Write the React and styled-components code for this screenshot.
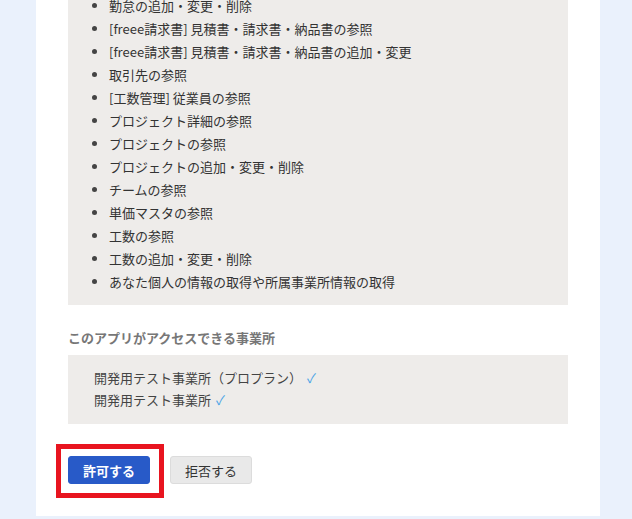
import React from "react";
import styled, { createGlobalStyle } from "styled-components";

const permissions = [
  "勤怠の追加・変更・削除",
  "[freee請求書] 見積書・請求書・納品書の参照",
  "[freee請求書] 見積書・請求書・納品書の追加・変更",
  "取引先の参照",
  "[工数管理] 従業員の参照",
  "プロジェクト詳細の参照",
  "プロジェクトの参照",
  "プロジェクトの追加・変更・削除",
  "チームの参照",
  "単価マスタの参照",
  "工数の参照",
  "工数の追加・変更・削除",
  "あなた個人の情報の取得や所属事業所情報の取得",
];

const companies = ["開発用テスト事業所（プロプラン）", "開発用テスト事業所"];

const GlobalStyle = createGlobalStyle`
  html, body {
    margin: 0;
    padding: 0;
    background: #eaf1fc;
    overflow: hidden;
  }
  body {
    font-family: "Noto Sans CJK JP", "Liberation Sans", sans-serif;
    color: #333;
    font-size: 13px;
  }
`;

const Page = styled.div`
  height: 519px;
  padding: 0 32px 0 36px;
  overflow: hidden;
`;

const Card = styled.div`
  background: #fff;
  width: 564px;
  box-sizing: border-box;
  padding: 0 32px 32px;
`;

const GrayBox = styled.div`
  background: #eeecea;
`;

const PermissionList = styled(GrayBox).attrs({ as: "ul" })`
  margin: -6px 0 0;
  padding: 0 20px 12px 41px;
  list-style: disc;
  li {
    line-height: 23px;
    padding-left: 0;
  }
  li::marker {
    color: #444;
  }
`;

const Heading = styled.h3`
  margin: 23px 0 7px;
  font-size: 13px;
  line-height: 20px;
  font-weight: bold;
  color: #777;
`;

const CompanyList = styled(GrayBox)`
  padding: 12px 26px 13px;
`;

const Company = styled.div`
  line-height: 22px;
  color: #444;
`;

const Check = styled.span`
  color: #4aa3e6;
  margin-left: 5px;
`;

const Actions = styled.div`
  display: flex;
  gap: 20px;
  margin-top: 32px;
`;

const Button = styled.button`
  position: relative;
  width: 82px;
  height: 28px;
  border-radius: 3px;
  font-family: inherit;
  font-size: 13px;
  cursor: pointer;
  background: ${(p) => (p.$primary ? "#285ac8" : "#e9e9e9")};
  color: ${(p) => (p.$primary ? "#fff" : "#333")};
  font-weight: ${(p) => (p.$primary ? "bold" : "normal")};
  border: 1px solid ${(p) => (p.$primary ? "#285ac8" : "#dcdcdc")};
  ${(p) =>
    p.$highlight &&
    `
    &::after {
      content: "";
      position: absolute;
      top: -13px;
      left: -13px;
      right: -15px;
      bottom: -15px;
      border: 5px solid #e8141f;
      pointer-events: none;
    }
  `}
`;

const App = () => {
  return (
    <>
      <GlobalStyle />
      <Page>
        <Card>
          <PermissionList>
            {permissions.map((item, index) => (
              <li key={index}>{item}</li>
            ))}
          </PermissionList>
          <Heading>このアプリがアクセスできる事業所</Heading>
          <CompanyList>
            {companies.map((name, index) => (
              <Company key={index}>
                {name}
                <Check>✓</Check>
              </Company>
            ))}
          </CompanyList>
          <Actions>
            <Button $primary $highlight>
              許可する
            </Button>
            <Button>拒否する</Button>
          </Actions>
        </Card>
      </Page>
    </>
  );
};

export default App;
